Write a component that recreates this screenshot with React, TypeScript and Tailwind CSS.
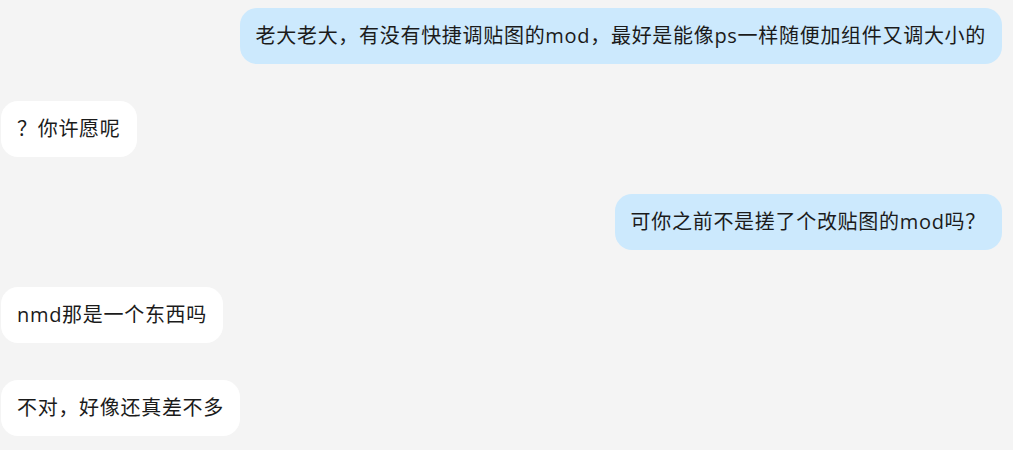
import React from "react";

type Msg = { text: string; mine: boolean };

const messages: Msg[] = [
  { text: "老大老大，有没有快捷调贴图的mod，最好是能像ps一样随便加组件又调大小的", mine: true },
  { text: "？你许愿呢", mine: false },
  { text: "可你之前不是搓了个改贴图的mod吗？", mine: true },
  { text: "nmd那是一个东西吗", mine: false },
  { text: "不对，好像还真差不多", mine: false },
];

function Bubble({ msg }: { msg: Msg }) {
  return (
    <div className={`flex ${msg.mine ? "justify-end" : "justify-start"}`}>
      <div
        className={`whitespace-nowrap rounded-[17px] px-4 py-[14px] text-[20px] leading-[28px] tracking-[0.7px] text-[#1b1b1b] ${
          msg.mine ? "bg-[#cce9fd]" : "bg-white"
        }`}
      >
        {msg.text}
      </div>
    </div>
  );
}

export default function App() {
  return (
    <div
      className="min-h-screen w-full bg-[#f4f4f4] pl-px pr-[11px] pt-2"
      style={{ fontFamily: '"Open Sans", "Noto Sans CJK SC", sans-serif' }}
    >
      <div className="flex flex-col gap-[37px]">
        {messages.map((m, i) => (
          <Bubble key={i} msg={m} />
        ))}
      </div>
    </div>
  );
}
